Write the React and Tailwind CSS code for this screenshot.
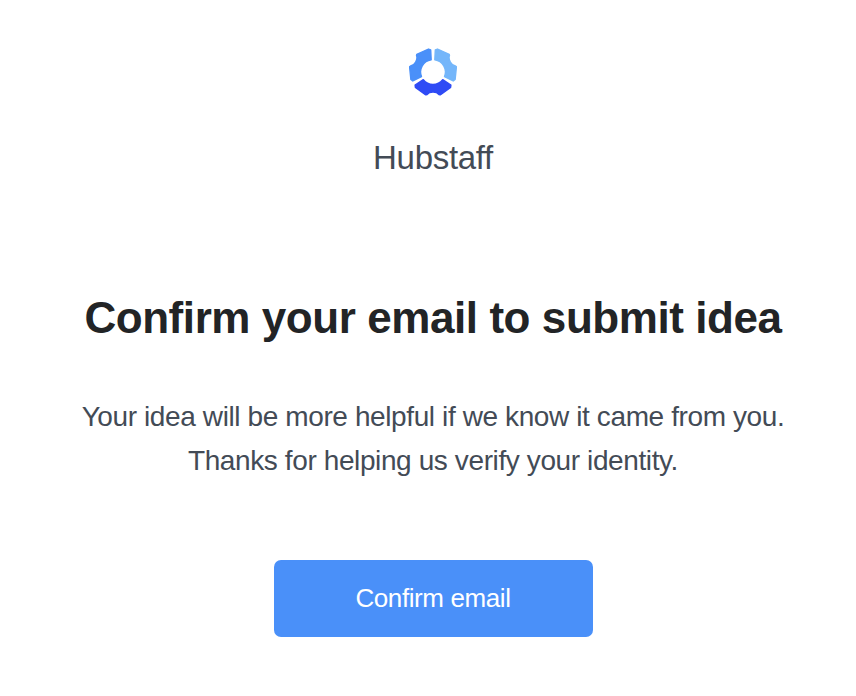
import React from "react";

// One gear segment, repeated every 120 degrees around the centre
const SEGMENT =
  "M14.3 31.7 A12.3 12.3 0 0 0 33.7 31.7 L41.9 37 L41.6 39.4 L31.2 46.9 L30 46.5 C27.6 43.2 20.4 43.2 18 46.5 L16.8 46.9 L6.4 39.4 L6.1 37 Z";

function HubstaffLogo() {
  return (
    <svg className="size-12" viewBox="0 0 48 48" aria-hidden="true">
      <g strokeWidth="1.4" strokeLinejoin="round">
        <path
          fill="#4a90f9"
          stroke="#4a90f9"
          d={SEGMENT}
          transform="rotate(120 24 24)"
        />
        <path
          fill="#74b6fa"
          stroke="#74b6fa"
          d={SEGMENT}
          transform="rotate(240 24 24)"
        />
        <path fill="#2f4bf5" stroke="#2f4bf5" d={SEGMENT} />
      </g>
    </svg>
  );
}

export default function App() {
  return (
    <main className="flex h-[696px] flex-col items-center bg-white pl-[10px] pt-12 font-['Liberation_Sans',Arial,sans-serif] text-[#434b56]">
      <HubstaffLogo />
      <p className="mt-10 text-[33px] leading-[44px] tracking-[-0.3px]">
        Hubstaff
      </p>
      <h1 className="mt-[108px] whitespace-nowrap text-[44px] font-bold leading-[60px] tracking-[-0.43px] text-[#222426]">
        Confirm your email to submit idea
      </h1>
      <p className="mt-[47px] whitespace-nowrap text-center text-[28px] leading-[44px] tracking-[-0.39px]">
        Your idea will be more helpful if we know it came from you.
        <br />
        Thanks for helping us verify your identity.
      </p>
      <button className="mt-[77px] h-[77px] w-[319px] rounded-[7px] bg-[#4a90f9] text-[26px] tracking-[-0.4px] text-white">
        Confirm email
      </button>
    </main>
  );
}
